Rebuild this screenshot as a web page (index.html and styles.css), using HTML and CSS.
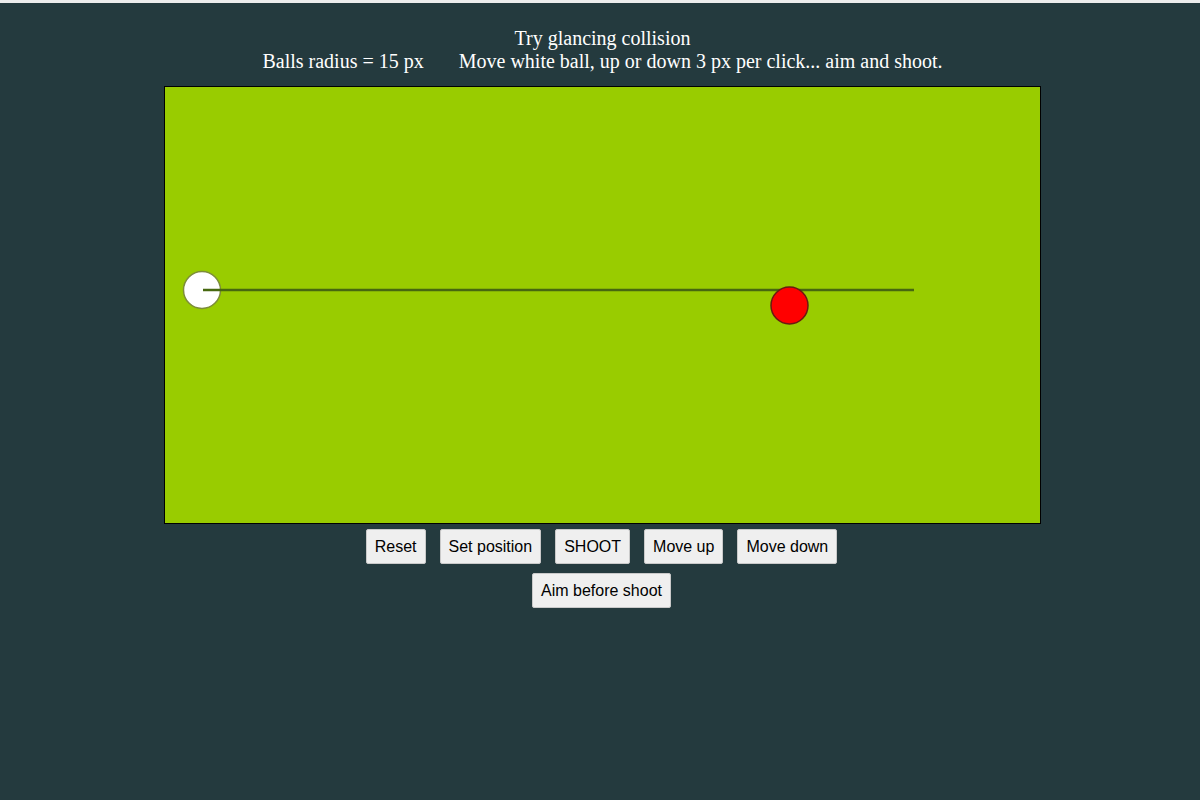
FILE: index.html
```html
<!DOCTYPE html>
<html>
<head>
<meta charset="utf-8">
<link rel="stylesheet" href="styles.css">
</head>
<body>
<div class="topbar"></div>
<div class="page">
  <div class="header">
    <div>Try glancing collision</div>
    <div><span>Balls radius = 15 px</span><span class="hint">Move white ball, up or down 3 px per click... aim and shoot.</span></div>
  </div>
  <div class="board">
    <svg width="875" height="436" viewBox="0 0 875 436">
      <circle cx="37" cy="203" r="18.5" fill="#ffffff" stroke="#7d8d3a" stroke-width="1.5"/>
      <line x1="38" y1="203" x2="749" y2="203" stroke="#476810" stroke-width="2.5"/>
      <circle cx="624.5" cy="218.5" r="18.5" fill="#ff0000" stroke="#6b1a12" stroke-width="1.5"/>
    </svg>
  </div>
  <div class="controls">
    <div class="row">
      <button class="btn">Reset</button>
      <button class="btn">Set position</button>
      <button class="btn">SHOOT</button>
      <button class="btn">Move up</button>
      <button class="btn">Move down</button>
    </div>
    <div class="row">
      <button class="btn">Aim before shoot</button>
    </div>
  </div>
</div>
</body>
</html>
```
FILE: styles.css
```css
html, body {
  margin: 0;
  padding: 0;
  background: #243a3e;
  height: 100%;
}
.topbar {
  height: 3px;
  background: #ececec;
}
.page {
  padding-left: 5px;
}
.header {
  padding-top: 24px;
  text-align: center;
  font-family: "Liberation Serif", "Times New Roman", serif;
  font-size: 20px;
  line-height: 23px;
  color: #ffffff;
}
.hint {
  margin-left: 35px;
}
.board {
  width: 875px;
  height: 436px;
  margin: 13px auto 0;
  border: 1px solid #000;
  background: #99cc00;
}
.board svg {
  display: block;
}
.controls {
  display: flex;
  flex-direction: column;
  align-items: center;
  gap: 9px;
  margin-top: 5px;
  padding-right: 2px;
}
.row {
  display: flex;
  gap: 14px;
  justify-content: center;
}
.btn {
  font-family: "Liberation Sans", Arial, sans-serif;
  font-size: 16px;
  line-height: 18px;
  color: #000;
  background: #efefef;
  border: 1px solid #c9c9c9;
  border-radius: 2px;
  padding: 8px 8px 7px;
  margin: 0;
}
```
